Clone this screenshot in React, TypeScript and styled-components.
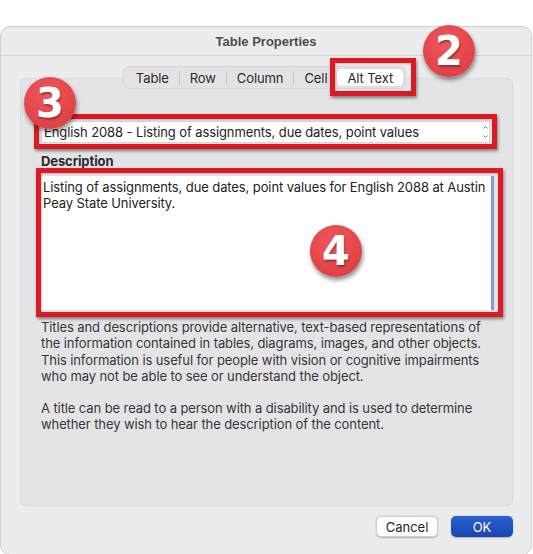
import React from 'react'
import styled, { createGlobalStyle } from 'styled-components'

const GlobalStyle = createGlobalStyle`
  html, body {
    margin: 0;
    padding: 0;
    background: #ffffff;
  }
  body {
    font-family: Inter, 'Liberation Sans', Arial, sans-serif;
    font-size: 13px;
    letter-spacing: -0.1px;
    color: #262626;
    -webkit-font-smoothing: antialiased;
  }
`

const Page = styled.div`
  padding-top: 26px;
  width: 533px;
  height: 554px;
  box-sizing: border-box;
  overflow: hidden;
`

const Window = styled.div`
  position: relative;
  width: 532px;
  height: 529px;
  box-sizing: border-box;
  background: #ececec;
  border: 1px solid #cfcfcf;
  border-radius: 10px;
  display: flex;
  flex-direction: column;
`

const TitleBar = styled.div`
  height: 28px;
  border-bottom: 1px solid #d3d3d3;
  display: flex;
  align-items: center;
  justify-content: center;
  font-family: 'Liberation Sans', Arial, sans-serif;
  letter-spacing: 0;
  font-weight: bold;
  color: #4d4d4d;
  font-size: 13px;
`

const Body = styled.div`
  flex: 1;
  display: flex;
  flex-direction: column;
  padding: 10px 18px 0 19px;
`

const TabsRow = styled.div`
  display: flex;
  justify-content: center;
  position: relative;
  z-index: 1;
  margin-bottom: -11px;
  padding-right: 4px;
`

const Segmented = styled.div`
  display: flex;
  align-items: center;
  height: 21px;
  padding: 0 2px;
  background: #e3e3e5;
  border: 1px solid #d6d6d8;
  border-radius: 6px;
`

const Tab = styled.div<{ $active?: boolean }>`
  height: 17px;
  display: flex;
  align-items: center;
  padding: 0 10px;
  font-size: 13px;
  color: #2a2a2a;
  border-radius: 4px;
  background: ${(p) => (p.$active ? '#ffffff' : 'transparent')};
  box-shadow: ${(p) => (p.$active ? '0 0 1px rgba(0,0,0,0.3)' : 'none')};
`

const TabSep = styled.div`
  width: 1px;
  height: 14px;
  background: #c9c9cb;
`

const Panel = styled.div`
  height: 428px;
  box-sizing: border-box;
  background: #e4e4e6;
  border: 1px solid #d9d9db;
  border-radius: 5px;
  padding: 21px 20px 0 20px;
  display: flex;
  flex-direction: column;
`

const Label = styled.div<{ $gap?: number }>`
  font-weight: bold;
  font-size: 13px;
  color: #2b2b2b;
  height: 16px;
  line-height: 16px;
  margin-top: ${(p) => p.$gap ?? 0}px;
`

const TextField = styled.div`
  margin-top: 5px;
  height: 22px;
  box-sizing: border-box;
  background: #ffffff;
  border: 1px solid #d6d6d6;
  display: flex;
  align-items: center;
  padding-left: 2px;
  padding-right: 1px;
  font-size: 13px;
  color: #222;
  margin-right: 2px;
`

const FieldText = styled.span`
  flex: 1;
  white-space: nowrap;
  overflow: hidden;
`

const TextArea = styled.div`
  margin-top: 7px;
  height: 134px;
  box-sizing: border-box;
  background: #ffffff;
  border-right: 3px solid #819ed2;
  padding: 3px 2px 0 2px;
  font-size: 13px;
  line-height: 16px;
  color: #222;
  margin-right: -2px;
  white-space: nowrap;
`

const HelpText = styled.p<{ $gap?: number }>`
  margin: ${(p) => p.$gap ?? 9}px 0 0 0;
  font-size: 13px;
  line-height: 16.3px;
  color: #363636;
  white-space: nowrap;
`

const Footer = styled.div`
  display: flex;
  justify-content: flex-end;
  gap: 13px;
  padding-top: 10px;
`

const Button = styled.button<{ $primary?: boolean }>`
  width: 62px;
  height: 21px;
  border-radius: 5px;
  font-family: Inter, 'Liberation Sans', Arial, sans-serif;
  font-size: 13px;
  padding: 0;
  border: ${(p) => (p.$primary ? 'none' : '1px solid #d0d0d0')};
  color: ${(p) => (p.$primary ? '#ffffff' : '#262626')};
  background: ${(p) =>
    p.$primary ? 'linear-gradient(#2a5fcd, #1846b2)' : '#ffffff'};
  box-shadow: 0 0.5px 1.5px rgba(0, 0, 0, 0.25);
`

const Highlight = styled.div`
  position: absolute;
  box-sizing: border-box;
  border: 5px solid #dc1a22;
  box-shadow: 1px 2px 3px rgba(0, 0, 0, 0.45),
    inset 1px 1px 2px rgba(0, 0, 0, 0.2);
  pointer-events: none;
  z-index: 5;
`

const Badge = styled.div`
  position: absolute;
  width: 52px;
  height: 52px;
  border-radius: 50%;
  background: radial-gradient(circle at 45% 35%, #f0585c 0%, #e34549 60%, #d63a3e 100%);
  box-shadow: 1px 3px 4px rgba(0, 0, 0, 0.45);
  color: #ffffff;
  font-family: 'DejaVu Sans', 'Liberation Sans', sans-serif;
  font-weight: bold;
  font-size: 40px;
  letter-spacing: 0;
  display: flex;
  align-items: center;
  justify-content: center;
  text-shadow: 1px 2px 2px rgba(0, 0, 0, 0.35);
  z-index: 6;
`

const Stepper = () => (
  <svg width="5" height="14" viewBox="0 0 5 14">
    <path d="M0.5 3.5 L2.5 1.5 L4.5 3.5" fill="none" stroke="#666" strokeWidth="0.8" />
    <path d="M0.5 10.5 L2.5 12.5 L4.5 10.5" fill="none" stroke="#666" strokeWidth="0.8" />
  </svg>
)

const tabs = ['Table', 'Row', 'Column', 'Cell', 'Alt Text']

export default function App() {
  return (
    <>
      <GlobalStyle />
      <Page>
        <Window>
          <TitleBar>Table Properties</TitleBar>
          <Body>
            <TabsRow>
              <Segmented>
                {tabs.map((t, i) => (
                  <React.Fragment key={t}>
                    {i > 0 && i < tabs.length - 1 && <TabSep />}
                    <Tab $active={t === 'Alt Text'}>{t}</Tab>
                  </React.Fragment>
                ))}
              </Segmented>
            </TabsRow>
            <Panel>
              <Label>Title</Label>
              <TextField>
                <FieldText>English 2088 - Listing of assignments, due dates, point values</FieldText>
                <Stepper />
              </TextField>
              <Label $gap={10}>Description</Label>
              <TextArea>
                Listing of assignments, due dates, point values for English 2088 at Austin
                <br />
                Peay State University.
              </TextArea>
              <HelpText>
                Titles and descriptions provide alternative, text-based representations of
                <br />
                the information contained in tables, diagrams, images, and other objects.
                <br />
                This information is useful for people with vision or cognitive impairments
                <br />
                who may not be able to see or understand the object.
              </HelpText>
              <HelpText $gap={16}>
                A title can be read to a person with a disability and is used to determine
                <br />
                whether they wish to hear the description of the content.
              </HelpText>
            </Panel>
            <Footer>
              <Button>Cancel</Button>
              <Button $primary>OK</Button>
            </Footer>
          </Body>

          <Highlight style={{ left: 329, top: 31, width: 86, height: 38 }} />
          <Highlight style={{ left: 33, top: 87, width: 463, height: 35 }} />
          <Highlight style={{ left: 35, top: 141, width: 467, height: 149 }} />
          <Badge style={{ left: 422, top: -2 }}>2</Badge>
          <Badge style={{ left: 23, top: 50 }}>3</Badge>
          <Badge style={{ left: 309, top: 198 }}>4</Badge>
        </Window>
      </Page>
    </>
  )
}
